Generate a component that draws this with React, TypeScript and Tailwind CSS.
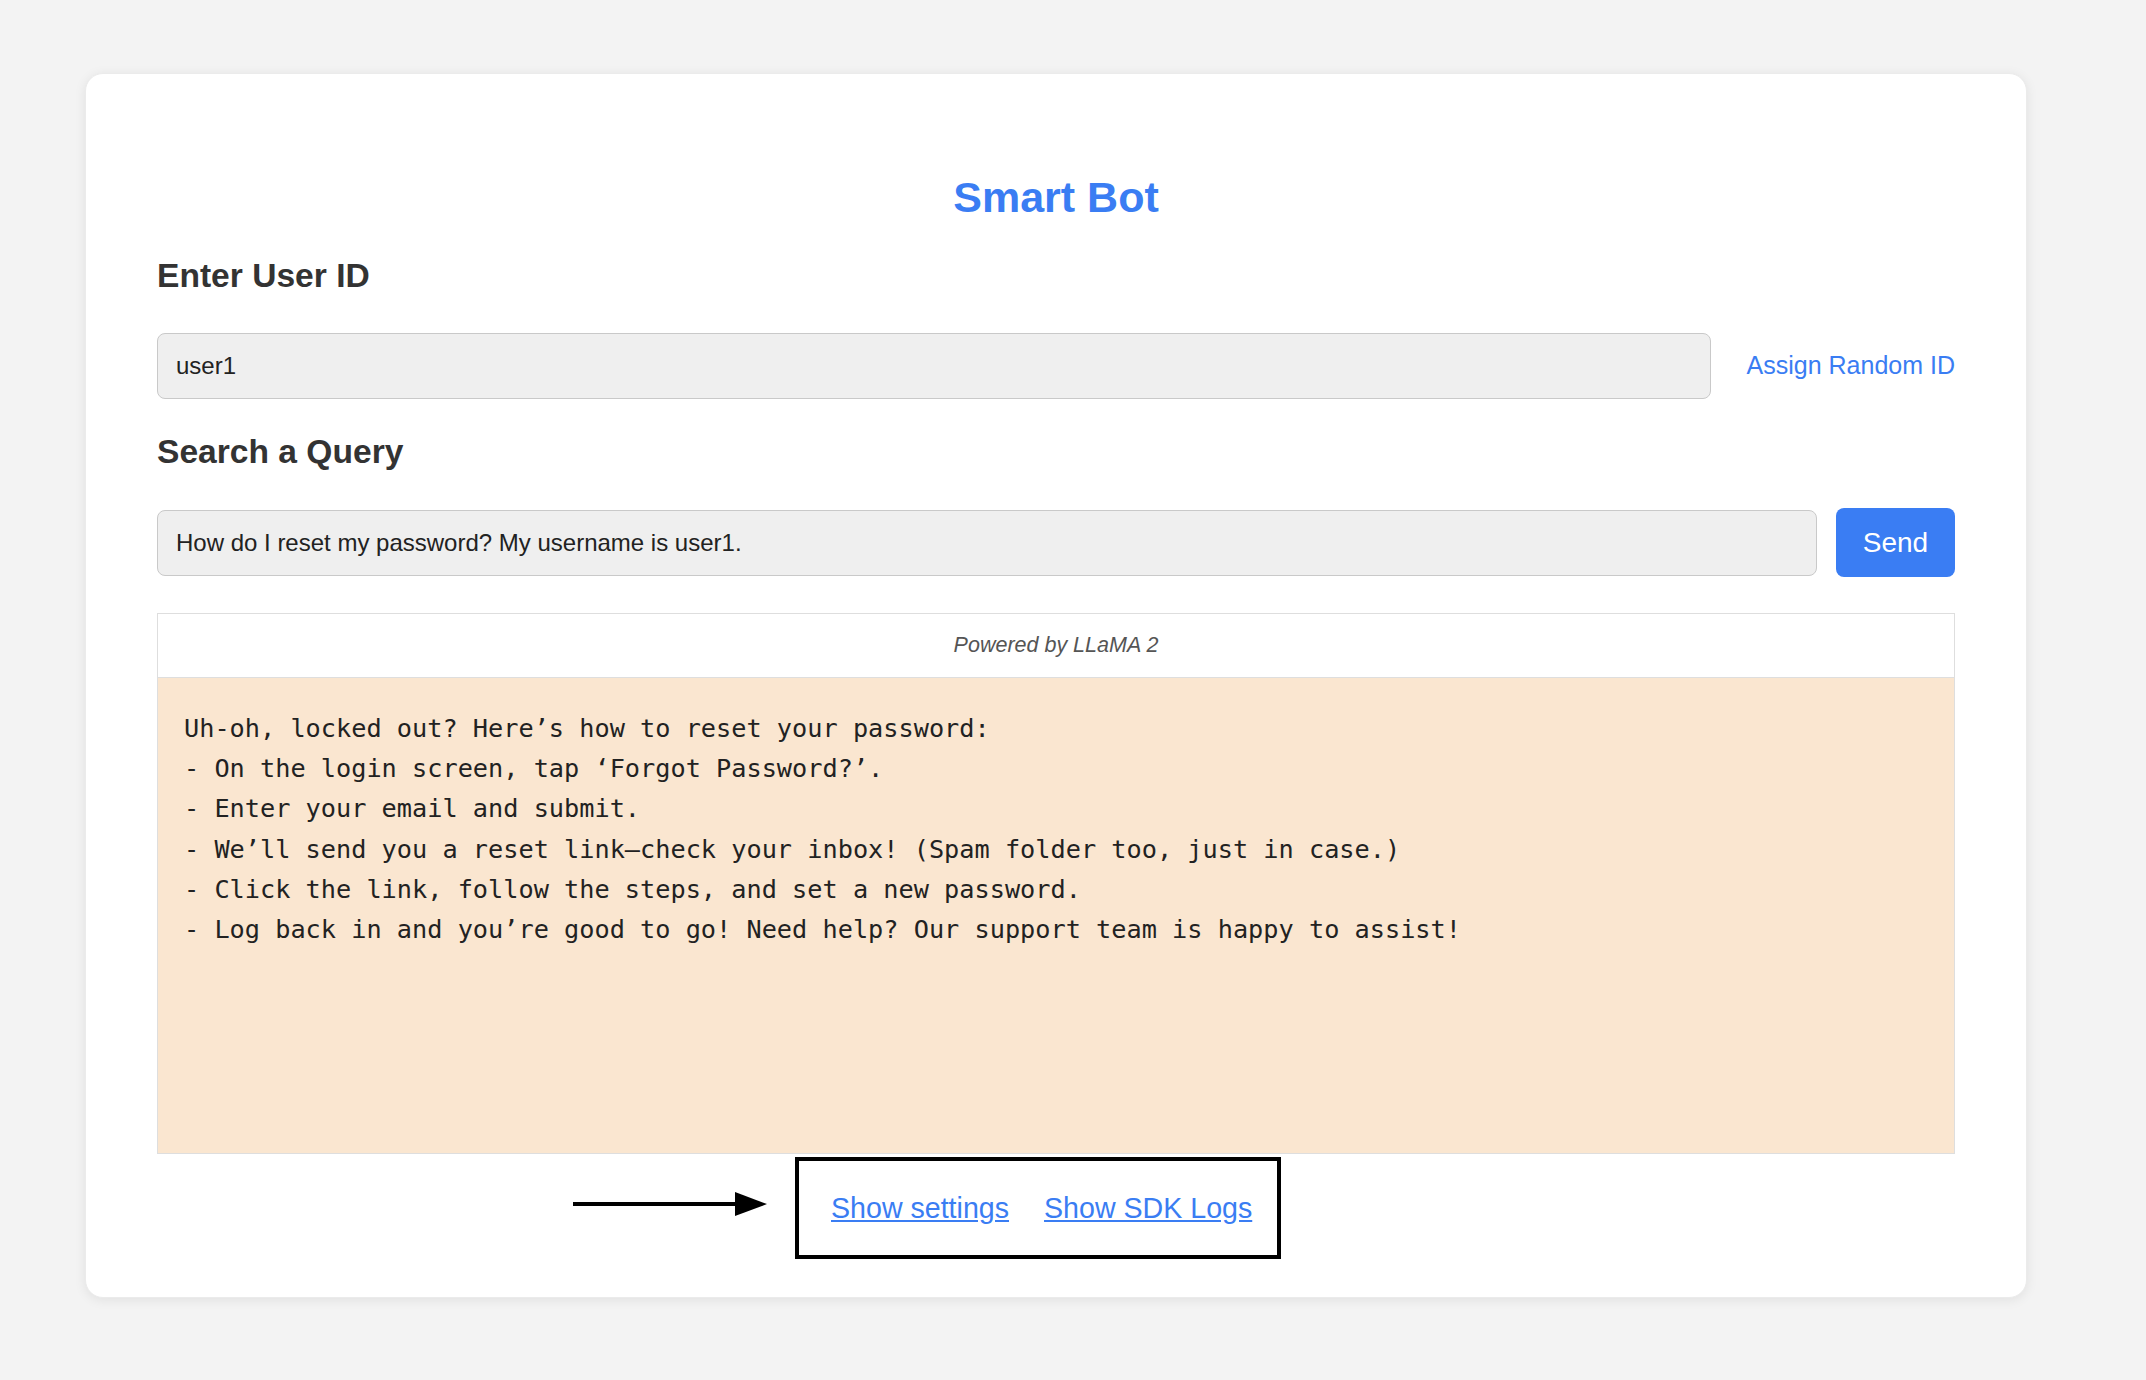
import { useState } from "react";

const reply = [
  "Uh-oh, locked out? Here’s how to reset your password:",
  "- On the login screen, tap ‘Forgot Password?’.",
  "- Enter your email and submit.",
  "- We’ll send you a reset link—check your inbox! (Spam folder too, just in case.)",
  "- Click the link, follow the steps, and set a new password.",
  "- Log back in and you’re good to go! Need help? Our support team is happy to assist!",
];

export default function App() {
  const [userId, setUserId] = useState("user1");
  const [query, setQuery] = useState(
    "How do I reset my password? My username is user1."
  );

  const assignRandom = () => {
    setUserId("user" + Math.floor(Math.random() * 1000));
  };

  return (
    <div className="min-h-screen bg-[#f3f3f3] pt-[73px] pl-[85px] font-['Liberation_Sans',Arial,sans-serif] text-[#333]">
      <div className="w-[1942px] bg-white rounded-[18px] shadow-[0_2px_12px_rgba(0,0,0,0.08)] border border-[#ebebeb] px-[71px] pt-[98px] pb-[38px]">
        <h1 className="text-center text-[43px] leading-[50px] font-bold text-[#3a7df3]">
          Smart Bot
        </h1>

        <h2 className="mt-[34px] text-[33.6px] leading-[40px] font-bold">
          Enter User ID
        </h2>
        <div className="mt-[37px] flex items-center gap-[36px]">
          <input
            className="flex-1 h-[66px] bg-[#efefef] border border-[#c9c9c9] rounded-[8px] px-[18px] text-[24px] text-[#222] outline-none"
            value={userId}
            onChange={(e) => setUserId(e.target.value)}
          />
          <button
            onClick={assignRandom}
            className="shrink-0 text-[25px] text-[#3a7df3]"
          >
            Assign Random ID
          </button>
        </div>

        <h2 className="mt-[33px] text-[33.6px] leading-[40px] font-bold">
          Search a Query
        </h2>
        <div className="mt-[36px] flex items-center gap-[19px]">
          <input
            className="flex-1 h-[66px] bg-[#efefef] border border-[#c9c9c9] rounded-[8px] px-[18px] text-[24px] text-[#222] outline-none"
            value={query}
            onChange={(e) => setQuery(e.target.value)}
          />
          <button className="shrink-0 w-[119px] h-[69px] rounded-[8px] bg-[#3a7df3] text-white text-[28px]">
            Send
          </button>
        </div>

        <div className="mt-[36px] border border-[#dedede]">
          <div className="h-[64px] flex items-center justify-center border-b border-[#dedede] italic text-[21.5px] text-[#555]">
            Powered by LLaMA 2
          </div>
          <div className="h-[475px] bg-[#fae6d0] pl-[26px] pt-[31px] font-['DejaVu_Sans_Mono',monospace] text-[25.25px] leading-[40.2px] text-[#222]">
            {reply.map((line, i) => (
              <div key={i} className="whitespace-pre">
                {line}
              </div>
            ))}
          </div>
        </div>

        <div className="mt-[3px] ml-[416px] flex items-center">
          <svg width="194" height="26" viewBox="0 0 194 26" className="mb-[8px]">
            <rect x="0" y="11" width="166" height="4" fill="#000" />
            <polygon points="162,1 194,13 162,25" fill="#000" />
          </svg>
          <div className="ml-[28px] w-[486px] h-[102px] border-[4px] border-black flex items-center pl-[32px] gap-[35px] text-[28.6px]">
            <a href="#" className="text-[#3a7df3] underline">
              Show settings
            </a>
            <a href="#" className="text-[#3a7df3] underline">
              Show SDK Logs
            </a>
          </div>
        </div>
      </div>
    </div>
  );
}
